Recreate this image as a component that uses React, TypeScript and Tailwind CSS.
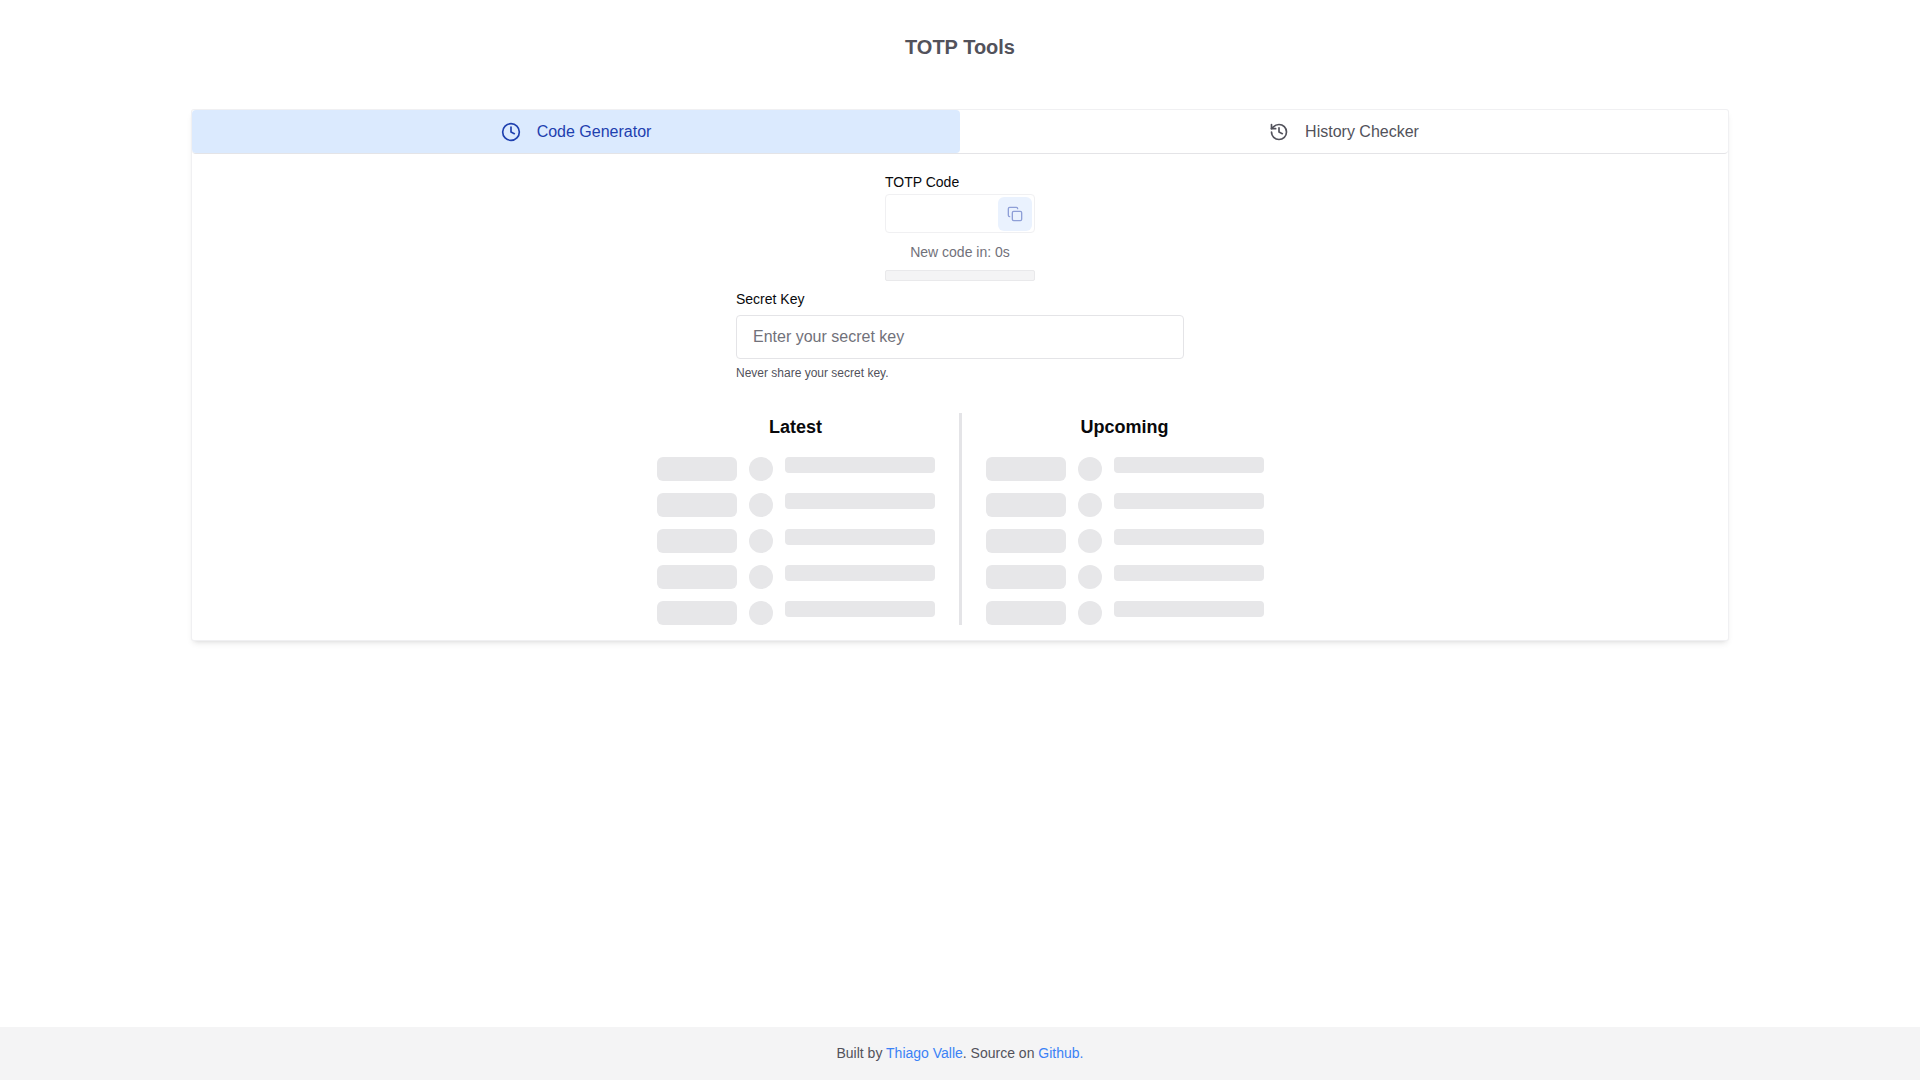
import { Clock, Copy, History } from "lucide-react";

const rows = [0, 1, 2, 3, 4];

const SkeletonColumn = ({ title }: { title: string }) => {
  return (
    <div className="w-[278px]">
      <h2 className="mb-4 text-center text-lg leading-7 font-bold text-[#09090b]">{title}</h2>
      <div className="flex flex-col gap-3">
        {rows.map((r) => (
          <div key={r} className="flex gap-3">
            <div className="h-6 w-20 rounded-md bg-[#e7e7e9]" />
            <div className="h-6 w-6 rounded-full bg-[#e7e7e9]" />
            <div className="h-4 w-[150px] rounded-[4px] bg-[#e7e7e9]" />
          </div>
        ))}
      </div>
    </div>
  );
};

export default function App() {
  return (
    <div className="flex min-h-screen flex-col bg-white font-['Liberation_Sans',Arial,sans-serif]">
      {/* Title */}
      <h1 className="pt-[33px] pb-[49px] text-center text-xl leading-7 font-bold text-[#52525b]">TOTP Tools</h1>

      {/* Card */}
      <div className="mx-auto w-[1536px] rounded-[2px] bg-white shadow-md ring-1 ring-[#f0f0f2]">
        <div className="flex rounded-[4px] border-b border-[#e4e4e7]">
          <button className="flex h-[43px] w-1/2 items-center justify-center gap-4 rounded-[4px] bg-[#dbeafe] text-base text-[#1e40af]">
            <Clock size={20} />
            Code Generator
          </button>
          <button className="flex h-[43px] w-1/2 items-center justify-center gap-4 text-base text-[#52525b]">
            <History size={20} />
            History Checker
          </button>
        </div>

        <div className="flex flex-col items-center px-4 pt-[18px] pb-[15px]">
          {/* TOTP code */}
          <div className="w-[150px]">
            <label className="block text-sm leading-5 text-[#09090b]">TOTP Code</label>
            <div className="mt-[2px] flex h-[39px] items-center justify-end rounded-[4px] border border-[#f0f0f2] pr-[2px]">
              <button className="flex h-[34px] w-[34px] items-center justify-center rounded-md bg-[#eaf2fe] text-[#8e9fd7]">
                <Copy size={16} />
              </button>
            </div>
            <p className="mt-[9px] text-center text-sm leading-5 text-[#71717a]">New code in: 0s</p>
            <div className="mt-[8px] h-[11px] rounded-[2px] border border-[#e9e9eb] bg-[#f4f4f5]" />
          </div>

          {/* Secret key */}
          <div className="mt-2 w-[448px]">
            <label className="block text-sm leading-5 text-[#09090b]">Secret Key</label>
            <input
              placeholder="Enter your secret key"
              className="mt-[6px] block h-[44px] w-full rounded-[4px] border border-[#e4e4e7] px-4 text-base text-black outline-none placeholder:text-[#71717a]"
            />
            <p className="mt-[6px] text-xs leading-4 text-[#52525b]">Never share your secret key.</p>
          </div>

          {/* Latest / upcoming */}
          <div className="mt-8 flex gap-6">
            <SkeletonColumn title="Latest" />
            <div className="w-[3px] bg-[#e4e4e7]" />
            <SkeletonColumn title="Upcoming" />
          </div>
        </div>
      </div>

      {/* Footer */}
      <footer className="mt-auto flex h-[53px] items-center justify-center bg-[#f4f4f5] pb-px text-sm text-[#52525b]">
        <p>
          Built by <a className="text-[#3b82f6]">Thiago Valle</a>. Source on <a className="text-[#3b82f6]">Github.</a>
        </p>
      </footer>
    </div>
  );
}
